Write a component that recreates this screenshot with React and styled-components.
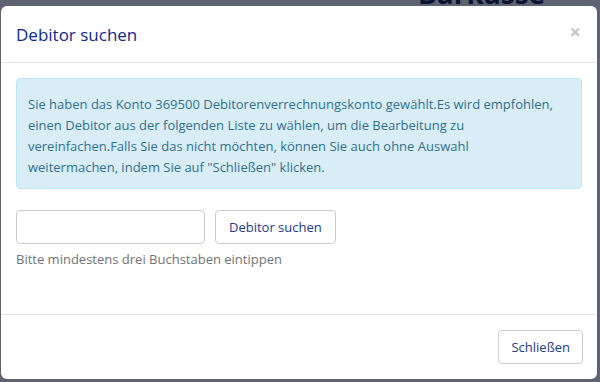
import styled, { createGlobalStyle } from "styled-components"

const Global = createGlobalStyle`
    html, body {
        margin: 0;
        padding: 0;
        background: #5f6271;
        font-family: "Open Sans", "Noto Sans", sans-serif;
    }
`

const Page = styled.div`
    position: relative;
    width: 600px;
    height: 382px;
    overflow: hidden;
    padding: 6px 3px 0 1px;
    box-sizing: border-box;
    background: #5f6271;
`

// page content behind the dimmed backdrop, only its bottom edge shows
const Behind = styled.div`
    position: absolute;
    top: -26px;
    left: 418px;
    font-family: "Open Sans", sans-serif;
    font-weight: 700;
    font-size: 28px;
    color: #0c1433;
    z-index: 0;
`

const Modal = styled.div`
    position: relative;
    z-index: 1;
    width: 596px;
    height: 373px;
    background: #fff;
    border-radius: 6px;
    display: flex;
    flex-direction: column;
    overflow: hidden;
`

const Header = styled.div`
    display: flex;
    align-items: center;
    justify-content: space-between;
    padding: 15px;
    height: 26px;
    border-bottom: 1px solid #e5e5e5;
`

const Title = styled.h4`
    margin: 0;
    font-size: 17px;
    font-weight: 400;
    color: #0d2a8c;
`

const Close = styled.span`
    font-size: 20px;
    font-weight: 700;
    color: #c4c4c4;
    line-height: 1;
    margin-right: 1px;
    margin-top: -4px;
`

const Body = styled.div`
    flex: 1;
    padding: 15px;
`

const Alert = styled.div`
    background: #d9edf7;
    border: 1px solid #bce8f1;
    border-radius: 4px;
    color: #31708f;
    font-size: 13px;
    line-height: 21px;
    padding: 15px 11px 10px 11px;
    margin-bottom: 21px;
`

const SearchRow = styled.div`
    display: flex;
    gap: 10px;
`

const Input = styled.input`
    width: 189px;
    height: 34px;
    box-sizing: border-box;
    border: 1px solid #ccc;
    border-radius: 4px;
    padding: 6px 12px;
    font-size: 13px;
`

const Button = styled.button`
    height: 34px;
    box-sizing: border-box;
    padding: 0 ${p => p.$pad || 12}px;
    background: #fff;
    border: 1px solid #ccc;
    border-radius: 4px;
    color: #1a3a8e;
    font-family: "Open Sans", "Noto Sans", sans-serif;
    font-size: 13px;
`

const Help = styled.div`
    margin-top: 5px;
    font-size: 13px;
    line-height: 20px;
    color: #737373;
`

const Footer = styled.div`
    display: flex;
    justify-content: flex-end;
    padding: 15px 14px 15px 15px;
    border-top: 1px solid #e5e5e5;
`

export default function App() {
    return (
        <>
            <Global />
            <Page>
                <Behind>Barkasse</Behind>
                <Modal>
                    <Header>
                        <Title>Debitor suchen</Title>
                        <Close>×</Close>
                    </Header>
                    <Body>
                        <Alert>
                            Sie haben das Konto 369500 Debitorenverrechnungskonto gewählt.Es wird empfohlen,<br />
                            einen Debitor aus der folgenden Liste zu wählen, um die Bearbeitung zu<br />
                            vereinfachen.Falls Sie das nicht möchten, können Sie auch ohne Auswahl<br />
                            weitermachen, indem Sie auf "Schließen" klicken.
                        </Alert>
                        <SearchRow>
                            <Input type="text" />
                            <Button $pad={13}>Debitor suchen</Button>
                        </SearchRow>
                        <Help>Bitte mindestens drei Buchstaben eintippen</Help>
                    </Body>
                    <Footer>
                        <Button>Schließen</Button>
                    </Footer>
                </Modal>
            </Page>
        </>
    )
}
